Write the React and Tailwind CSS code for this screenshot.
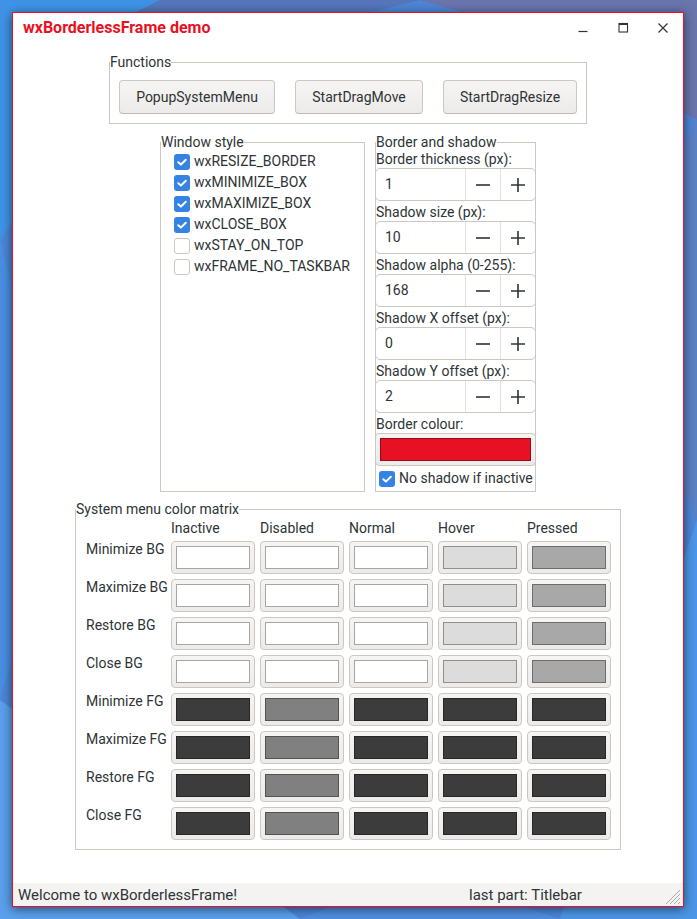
import React from "react";

const rowsBG = ["Minimize BG", "Maximize BG", "Restore BG", "Close BG"];
const rowsFG = ["Minimize FG", "Maximize FG", "Restore FG", "Close FG"];
const bgColors = ["bg-white", "bg-white", "bg-white", "bg-[#dcdcdc]", "bg-[#a8a8a8]"];
const fgColors = ["bg-[#3c3c3c]", "bg-[#808080]", "bg-[#3c3c3c]", "bg-[#3c3c3c]", "bg-[#3c3c3c]"];
const columns = ["Inactive", "Disabled", "Normal", "Hover", "Pressed"];

const styles = [
  ["wxRESIZE_BORDER", true],
  ["wxMINIMIZE_BOX", true],
  ["wxMAXIMIZE_BOX", true],
  ["wxCLOSE_BOX", true],
  ["wxSTAY_ON_TOP", false],
  ["wxFRAME_NO_TASKBAR", false],
];

const spins = [
  ["Border thickness (px):", "1"],
  ["Shadow size (px):", "10"],
  ["Shadow alpha (0-255):", "168"],
  ["Shadow X offset (px):", "0"],
  ["Shadow Y offset (px):", "2"],
];

function Check({ checked }) {
  if (!checked) {
    return <span className="h-[16px] w-[16px] shrink-0 rounded-[3px] border border-[#cdc7c2] bg-white" />;
  }
  return (
    <span className="flex h-[16px] w-[16px] shrink-0 items-center justify-center rounded-[3px] bg-[#3584e4]">
      <svg width="12" height="12" viewBox="0 0 12 12">
        <path d="M2.3 6.2 L4.9 8.6 L9.8 3.7" fill="none" stroke="white" strokeWidth="2" strokeLinecap="round" strokeLinejoin="round" />
      </svg>
    </span>
  );
}

function Button({ children, className }) {
  return (
    <div className={`flex h-[34px] items-center justify-center rounded-[4px] border border-[#cdc7c2] border-b-[#bfb8b1] bg-gradient-to-b from-[#f6f5f4] to-[#edebe9] ${className}`}>
      {children}
    </div>
  );
}

function Swatch({ color, className = "" }) {
  return (
    <div className={`flex h-[33px] rounded-[4px] border border-[#cdc7c2] bg-gradient-to-b from-[#f6f5f4] to-[#edebe9] p-[4px] ${className}`}>
      <div className={`flex-1 border border-black/35 ${color}`} />
    </div>
  );
}

function Spin({ value }) {
  return (
    <div className="-mx-px flex h-[33px] rounded-[5px] border border-[#cdc7c2] bg-white">
      <div className="flex flex-1 items-center pl-[9px]">{value}</div>
      <div className="flex w-[35px] items-center justify-center border-l border-[#e4e1de]">
        <svg width="16" height="16" viewBox="0 0 16 16">
          <path d="M1 8 H15" stroke="#2e3436" strokeWidth="1.6" />
        </svg>
      </div>
      <div className="flex w-[35px] items-center justify-center border-l border-[#e4e1de]">
        <svg width="16" height="16" viewBox="0 0 16 16">
          <path d="M1 8 H15 M8 1 V15" stroke="#2e3436" strokeWidth="1.6" />
        </svg>
      </div>
    </div>
  );
}

function Wallpaper() {
  return (
    <svg className="absolute inset-0" width="697" height="919" viewBox="0 0 697 919">
      <rect width="697" height="919" fill="#4d86d6" />
      <polygon points="0,0 160,0 0,240" fill="#3f93e6" />
      <polygon points="160,0 420,0 300,30 120,20" fill="#5675bb" />
      <polygon points="420,0 697,0 697,120 560,40" fill="#6a74ad" />
      <polygon points="697,120 697,520 600,300" fill="#5a80c6" />
      <polygon points="697,520 697,919 560,919" fill="#4b96e6" />
      <polygon points="0,240 0,700 60,480" fill="#4a8ee0" />
      <polygon points="0,700 0,919 300,919" fill="#5aa0ec" />
      <polygon points="300,919 560,919 420,870" fill="#4f8fe0" />
    </svg>
  );
}

export default function App() {
  return (
    <div className="relative h-[919px] w-[697px] overflow-hidden pl-[12px] pt-[12px] font-['Roboto','Liberation_Sans',sans-serif] text-[14px] text-[#2e3436]">
      <Wallpaper />
      <div className="relative flex h-[895px] w-[672px] flex-col border border-[#e81123] bg-white shadow-[0_2px_10px_rgba(0,0,0,0.55)]">
        {/* title bar */}
        <div className="flex h-[30px] items-center">
          <div className="flex-1 pl-[10px] text-[16px] font-bold text-[#e81123]">wxBorderlessFrame demo</div>
          <div className="flex h-full">
            <div className="flex w-[40px] items-center justify-center">
              <svg width="12" height="12" viewBox="0 0 12 12">
                <path d="M1.5 9.5 H10.5" stroke="#333" strokeWidth="1.2" />
              </svg>
            </div>
            <div className="flex w-[40px] items-center justify-center">
              <svg width="12" height="12" viewBox="0 0 12 12">
                <rect x="2" y="1.5" width="8.5" height="8.5" fill="none" stroke="#333" strokeWidth="1.1" />
                <path d="M2 2 H10.5" stroke="#333" strokeWidth="2" />
              </svg>
            </div>
            <div className="flex w-[40px] items-center justify-center">
              <svg width="12" height="12" viewBox="0 0 12 12">
                <path d="M1.5 1.5 L10.5 10.5 M10.5 1.5 L1.5 10.5" stroke="#333" strokeWidth="1.2" />
              </svg>
            </div>
          </div>
        </div>

        {/* body */}
        <div className="flex flex-1 flex-col items-center pt-[11px]">
          <fieldset className="border border-[#cdc7c2]">
            <legend className="leading-[17px]">Functions</legend>
            <div className="flex gap-[20px] px-[9px] pb-[9px] pt-[9px]">
              <Button className="w-[156px]">PopupSystemMenu</Button>
              <Button className="w-[128px]">StartDragMove</Button>
              <Button className="w-[134px]">StartDragResize</Button>
            </div>
          </fieldset>

          <div className="mt-[10px] flex gap-[10px]">
            <fieldset className="w-[205px] border border-[#cdc7c2]">
              <legend className="leading-[17px]">Window style</legend>
              <div className="flex flex-col pl-[13px]">
                {styles.map(([label, on]) => (
                  <div key={label} className="flex h-[21px] items-center gap-[4px]">
                    <Check checked={on} />
                    <span>{label}</span>
                  </div>
                ))}
              </div>
            </fieldset>

            <fieldset className="w-[161px] border border-[#cdc7c2]">
              <legend className="leading-[17px]">Border and shadow</legend>
              <div className="flex flex-col">
                {spins.map(([label, value]) => (
                  <div key={label} className="mb-[3px] flex flex-col">
                    <div className="whitespace-nowrap leading-[17px]">{label}</div>
                    <Spin value={value} />
                  </div>
                ))}
                <div className="whitespace-nowrap leading-[17px]">Border colour:</div>
                <Swatch color="bg-[#e81123]" className="-mx-px" />
                <div className="flex h-[25px] items-center gap-[4px] pl-[3px] whitespace-nowrap">
                  <Check checked />
                  <span>No shadow if inactive</span>
                </div>
              </div>
            </fieldset>
          </div>

          <fieldset className="mt-[9px] border border-[#cdc7c2]">
            <legend className="leading-[17px]">System menu color matrix</legend>
            <div className="flex flex-col pb-[9px] pl-[10px] pr-[9px]">
              <div className="flex h-[18px] gap-[5px] leading-[20px]">
                <div className="w-[80px]" />
                {columns.map((c) => (
                  <div key={c} className="w-[84px]">{c}</div>
                ))}
              </div>
              {[...rowsBG.map((r) => [r, bgColors]), ...rowsFG.map((r) => [r, fgColors])].map(([label, colors]) => (
                <div key={label} className="mt-[5px] flex h-[33px] gap-[5px]">
                  <div className="w-[80px] whitespace-nowrap leading-[17px]">{label}</div>
                  {colors.map((c, i) => (
                    <Swatch key={i} color={c} className="w-[84px]" />
                  ))}
                </div>
              ))}
            </div>
          </fieldset>
        </div>

        {/* status bar */}
        <div className="relative flex h-[23px] bg-[#f4f3f1] text-[15px] leading-[25px]">
          <div className="w-[451px] pl-[5px]">Welcome to wxBorderlessFrame!</div>
          <div className="pl-[5px]">last part: Titlebar</div>
          <svg className="absolute bottom-[1px] right-[2px]" width="19" height="19" viewBox="0 0 19 19">
            <path d="M18 4 L4 18 M18 8 L8 18 M18 12 L12 18 M18 16 L16 18" stroke="#a9a9a9" strokeWidth="1" />
          </svg>
        </div>
      </div>
    </div>
  );
}
